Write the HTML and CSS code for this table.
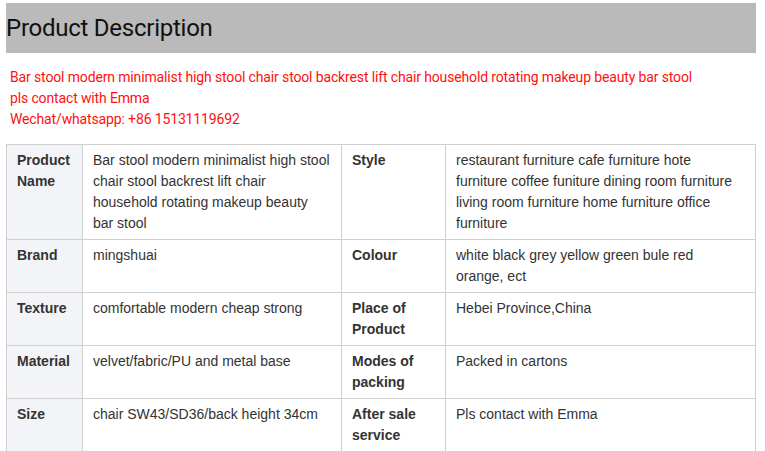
FILE: index.html
```html
<!DOCTYPE html>
<html>
<head>
<meta charset="utf-8">
<link rel="stylesheet" href="styles.css">
</head>
<body>
<div class="page">
  <h2 class="title">Product Description</h2>
  <div class="intro">
    <p>Bar stool modern minimalist high stool chair stool backrest lift chair household rotating makeup beauty bar stool</p>
    <p>pls contact with Emma</p>
    <p>Wechat/whatsapp: +86 15131119692</p>
  </div>
  <table class="spec">
    <colgroup>
      <col class="c1"><col class="c2"><col class="c3"><col class="c4">
    </colgroup>
    <tbody>
      <tr>
        <th>Product Name</th>
        <td>Bar stool modern minimalist high stool chair stool backrest lift chair household rotating makeup beauty bar stool</td>
        <th class="plain">Style</th>
        <td class="last">restaurant furniture cafe furniture hote furniture coffee funiture dining room furniture living room furniture home furniture office furniture</td>
      </tr>
      <tr>
        <th>Brand</th>
        <td>mingshuai</td>
        <th class="plain">Colour</th>
        <td class="last">white black grey yellow green bule red orange, ect</td>
      </tr>
      <tr>
        <th>Texture</th>
        <td>comfortable modern cheap strong</td>
        <th class="plain">Place of Product</th>
        <td class="last">Hebei Province,China</td>
      </tr>
      <tr>
        <th>Material</th>
        <td>velvet/fabric/PU and metal base</td>
        <th class="plain">Modes of packing</th>
        <td class="last">Packed in cartons</td>
      </tr>
      <tr>
        <th>Size</th>
        <td>chair SW43/SD36/back height 34cm</td>
        <th class="plain">After sale service</th>
        <td class="last">Pls contact with Emma</td>
      </tr>
    </tbody>
  </table>
</div>
</body>
</html>
```
FILE: styles.css
```css
html, body {
  margin: 0;
  padding: 0;
  background: #fff;
}

.page {
  padding: 3px 9px 0 6px;
}

.title {
  margin: 0;
  height: 50px;
  line-height: 51px;
  background: #bababa;
  font-family: Roboto, "Liberation Sans", sans-serif;
  font-size: 24px;
  font-weight: 400;
  letter-spacing: -0.25px;
  color: #111;
  width: 750px;
}

.intro {
  margin: 14px 0 14px 4px;
  font-family: Roboto, "Liberation Sans", sans-serif;
  font-size: 14px;
  line-height: 21px;
  letter-spacing: -0.14px;
  color: #ff1010;
}

.intro p {
  margin: 0;
}

.spec {
  border-collapse: collapse;
  table-layout: fixed;
  width: 749px;
  font-family: "Liberation Sans", Arial, sans-serif;
  font-size: 14px;
  line-height: 21px;
  color: #333;
}

.c1 { width: 76px; }
.c2 { width: 259px; }
.c3 { width: 104px; }
.c4 { width: 310px; }

.spec th,
.spec td {
  border: 1px solid #d0d0d0;
  padding: 5px 10px;
  vertical-align: top;
  text-align: left;
}

.spec td.last {
  padding-right: 13px;
}

.spec th {
  font-weight: 700;
  background: #f3f4f8;
}

.spec th.plain {
  background: #fff;
}
```
